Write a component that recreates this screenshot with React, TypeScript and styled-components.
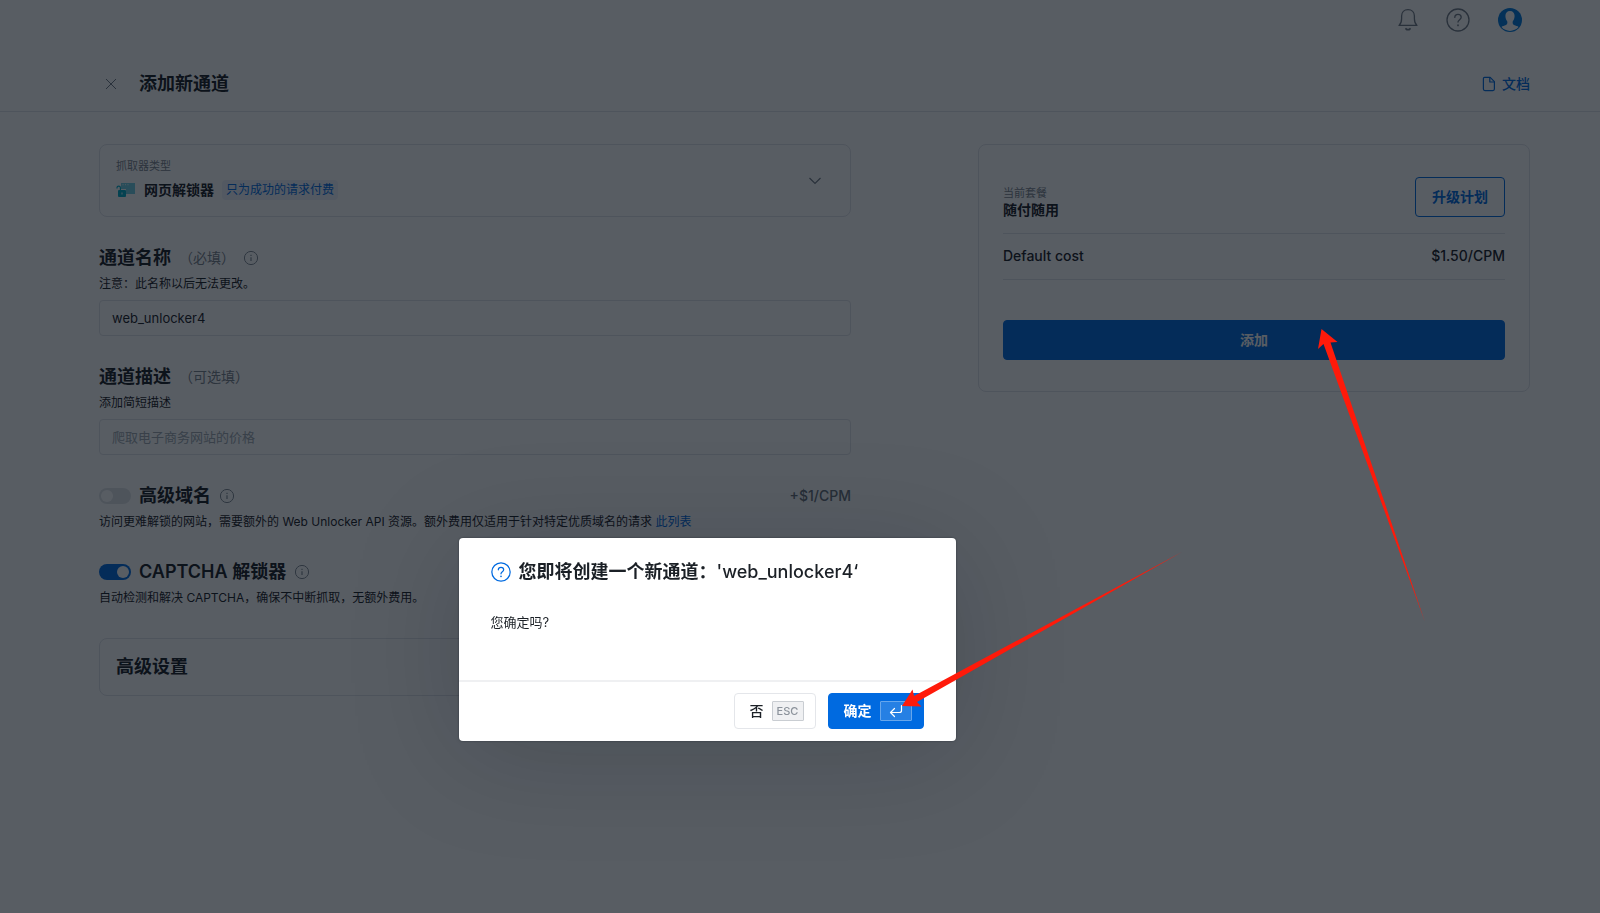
import React from "react";
import styled, { createGlobalStyle, css } from "styled-components";

const ink = "#1b2026";
const blue = "#006ae0";
const line = "#e0e2e8";
const muted = "#7b828c";

const GlobalStyle = createGlobalStyle`
  *, *::before, *::after { box-sizing: border-box; }
  body {
    margin: 0;
    background: #fff;
    color: ${ink};
    font-family: Inter, "Noto Sans CJK SC", sans-serif;
    font-size: 14px;
    line-height: 20px;
  }
  button, input { font: inherit; color: inherit; }
  h1, h2, p { margin: 0; }
  svg { display: block; flex: none; }
`;

const Page = styled.div`
  min-height: 100vh;
`;

const TopBar = styled.header`
  display: flex;
  align-items: center;
  justify-content: flex-end;
  gap: 28px;
  height: 40px;
  padding-right: 78px;
`;

const IconButton = styled.button`
  display: flex;
  align-items: center;
  justify-content: center;
  min-width: 16px;
  padding: 0;
  border: 0;
  background: none;
  color: #727a86;
`;

const SubHeader = styled.div`
  display: flex;
  align-items: center;
  gap: 20px;
  height: 56px;
  margin-top: 16px;
  padding: 0 70px 0 103px;
  border-bottom: 1px solid ${line};
`;

const headingText = css`
  color: ${ink};
  font-size: 18px;
  line-height: 28px;
  font-weight: 600;
`;

const PageTitle = styled.h1`
  ${headingText}
  flex: 1;
`;

const DocsLink = styled.a`
  display: flex;
  align-items: center;
  gap: 6px;
  color: ${blue};
  font-weight: 500;
  text-decoration: none;
`;

const Main = styled.main`
  display: grid;
  grid-template-columns: 752fr 552fr;
  gap: 127px;
  align-items: start;
  padding: 32px 70px 32px 99px;
`;

const Form = styled.form`
  display: flex;
  flex-direction: column;
  gap: 27px;
`;

const Card = styled.section`
  border: 1px solid ${line};
  border-radius: 8px;
`;

const TypeCard = styled(Card)`
  display: flex;
  align-items: center;
  justify-content: space-between;
  height: 73px;
  padding: 0 28px 0 16px;
`;

const TypeInfo = styled.div`
  padding-bottom: 4px;
`;

const Caption = styled.div`
  color: ${muted};
  font-size: 11px;
  line-height: 16px;
`;

const TypeRow = styled.div`
  display: flex;
  align-items: center;
  gap: 8px;
  margin-top: 6px;
`;

const Strong = styled.div`
  font-weight: 700;
  line-height: 18px;
`;

const Tag = styled.span`
  padding: 0 4px;
  border-radius: 4px;
  background: #eef3fc;
  color: ${blue};
  font-size: 12px;
  line-height: 20px;
`;

const HeadingRow = styled.div`
  display: flex;
  align-items: center;
  gap: 8px;
  height: 28px;
  color: #828a95;
`;

const Label = styled.label`
  ${headingText}
`;

const SectionTitle = styled.h2`
  ${headingText}
`;

const Hint = styled.span`
  color: ${muted};
`;

const Price = styled.span`
  margin-left: auto;
  color: #69717b;
  font-weight: 500;
`;

const Note = styled.p`
  margin-top: 3px;
  font-size: 12px;
  line-height: 18px;

  a {
    color: ${blue};
    text-decoration: none;
  }
`;

const TextInput = styled.input`
  display: block;
  width: 100%;
  height: 36px;
  margin-top: 7px;
  padding: 0 12px;
  border: 1px solid ${line};
  border-radius: 4px;
  background: #fff;
  font-size: 13px;

  &::placeholder {
    color: #a0a7b0;
    opacity: 1;
  }
`;

const Toggle = styled.input`
  appearance: none;
  display: flex;
  flex: none;
  width: 32px;
  height: 16px;
  margin: 0;
  padding: 2px;
  border-radius: 8px;
  background: #e0e3e7;

  &::before {
    content: "";
    width: 12px;
    height: 12px;
    border-radius: 50%;
    background: #fff;
  }

  &:checked {
    justify-content: flex-end;
    background: ${blue};
  }
`;

const AdvancedCard = styled(Card)`
  margin-top: 4px;
  padding: 14px 16px;
`;

const PlanCard = styled(Card)`
  padding: 32px 24px 31px;
`;

const PlanRow = styled.div`
  display: flex;
  align-items: flex-start;
  justify-content: space-between;
  padding-bottom: 14px;
  border-bottom: 1px solid ${line};
`;

const PlanInfo = styled.div`
  padding-top: 8px;
`;

const CostRow = styled(PlanRow)`
  padding: 12px 0 13px;
  font-weight: 500;
`;

const Button = styled.button<{ $primary?: boolean; $wide?: boolean }>`
  height: 40px;
  padding: 0 16px;
  border: 1px solid ${blue};
  border-radius: 4px;
  background: ${(p) => (p.$primary ? blue : "#fff")};
  color: ${(p) => (p.$primary ? "#fff" : blue)};
  font-weight: 700;
  ${(p) => p.$wide && "display: block; width: 100%; margin-top: 40px;"}
`;

const Overlay = styled.div`
  position: fixed;
  inset: 0;
  display: flex;
  align-items: flex-start;
  justify-content: center;
  padding: 538px 186px 0 0;
  background: rgba(6, 13, 22, 0.67);
`;

const Dialog = styled.div`
  width: 497px;
  border-radius: 4px;
  background: #fff;
  box-shadow: 0 0 2px rgba(6, 13, 22, 0.5), 0 12px 112px rgba(6, 13, 22, 0.18);
`;

const DialogBody = styled.div`
  height: 144px;
  padding: 20px 32px;
  border-bottom: 2px solid #eff0f2;
`;

const DialogTitle = styled.div`
  display: flex;
  align-items: center;
  gap: 8px;
  color: ${blue};
`;

const ZoneName = styled.span`
  font-weight: 500;
`;

const DialogText = styled.p`
  margin-top: 26px;
  font-size: 13px;
`;

const DialogFooter = styled.div`
  display: flex;
  justify-content: flex-end;
  gap: 12px;
  padding: 11px 32px 12px;
`;

const DialogButton = styled.button<{ $primary?: boolean }>`
  display: flex;
  align-items: center;
  gap: 8px;
  height: 36px;
  padding: 0 11px 0 15px;
  border: 1px solid ${(p) => (p.$primary ? blue : "#e4e6ea")};
  border-radius: 4px;
  background: ${(p) => (p.$primary ? blue : "#fff")};
  color: ${(p) => (p.$primary ? "#fff" : ink)};
  font-weight: ${(p) => (p.$primary ? 700 : 500)};
`;

const Key = styled.kbd<{ $primary?: boolean }>`
  display: flex;
  align-items: center;
  justify-content: center;
  width: 32px;
  height: 20px;
  border: 1px solid ${(p) => (p.$primary ? "#66a6ec" : "#c9cdd2")};
  border-radius: 1px;
  background: ${(p) => (p.$primary ? "#2680e4" : "#eff0f2")};
  color: ${(p) => (p.$primary ? "#fff" : "#8b929b")};
  font-family: inherit;
  font-size: 11px;
  font-weight: 500;
`;

const Arrows = styled.svg`
  position: fixed;
  top: 0;
  left: 0;
  pointer-events: none;
`;

const InfoIcon = () => (
  <svg width="16" height="16" viewBox="0 0 16 16" fill="none" stroke="currentColor" aria-hidden="true">
    <circle cx="8" cy="8" r="6.6" />
    <path d="M8 7.2v3.8" strokeWidth="1.2" />
    <path d="M8 4.8v1.2" strokeWidth="1.2" />
  </svg>
);

const HelpIcon = ({ size, weight }: { size: number; weight: number }) => (
  <svg width={size} height={size} viewBox="0 0 24 24" fill="none" stroke="currentColor" strokeWidth={weight} strokeLinecap="round" aria-hidden="true">
    <circle cx="12" cy="12" r="11" />
    <path d="M8.8 9.4c0-1.8 1.4-3 3.2-3s3.2 1.2 3.2 2.9c0 2.3-3.2 2.4-3.2 4.8" />
    <path d="M12 17.2v.2" strokeWidth={weight * 1.3} />
  </svg>
);

const BellIcon = () => (
  <svg width="20" height="24" viewBox="0 0 20 24" fill="none" stroke="currentColor" strokeWidth="1.3" strokeLinejoin="round" strokeLinecap="round" aria-hidden="true">
    <path d="M1 17.400c2-1.600 2.600-3.800 2.600-6.600V8C3.600 4.200 6.200 1.600 10 1.600S16.400 4.200 16.400 8v2.800c0 2.800.6 5 2.600 6.600z" />
    <path d="M8 20.800c1.100 1.200 2.900 1.200 4 0" strokeWidth="1.800" />
  </svg>
);

const AvatarIcon = () => (
  <svg width="24" height="24" viewBox="0 0 24 24" aria-hidden="true">
    <circle cx="12" cy="12" r="12" fill="#0079dc" />
    <path fill="#fff" d="M12 3c-3 0-4.600 2-4.600 5 0 2.200.8 4 1.800 5.200.4 1.600.1 3.100-1.200 3.700-1.700.7-3.600 1-4.500 2a11 11 0 0 0 17 0c-.9-1-2.800-1.300-4.500-2-1.300-.6-1.600-2.100-1.200-3.700 1-1.200 1.800-3 1.800-5.200 0-3-1.600-5-4.600-5z" />
  </svg>
);

const CloseIcon = () => (
  <svg width="16" height="16" viewBox="0 0 16 16" fill="none" stroke="currentColor" aria-hidden="true">
    <path d="M3 3l10 10M13 3L3 13" />
  </svg>
);

const FileIcon = () => (
  <svg width="14" height="16" viewBox="0 0 14 16" fill="none" stroke="currentColor" strokeWidth="1.2" strokeLinejoin="round" aria-hidden="true">
    <path d="M2.500 1.400h5.700l4.200 4.200v7.500a1.500 1.500 0 0 1-1.500 1.500H2.900a1.500 1.500 0 0 1-1.500-1.500V2.500c0-.6.500-1.100 1.100-1.100z" />
    <path d="M7.800 1.600V6h4.400" />
  </svg>
);

const UnlockerIcon = () => (
  <svg width="20" height="16" viewBox="0 0 20 16" aria-hidden="true">
    <path fill="#72cfe3" d="M5 1h14v11h-9V7H5z" />
    <path d="M6.500 2.700h1M9 2.700h1M11.500 2.700h1" stroke="#e4f7fb" />
    <rect x="2" y="8" width="8" height="7" rx="1" fill="#00acc9" />
    <path d="M1 6.500V5.800a1.700 1.700 0 0 1 3.400 0V8" fill="none" stroke="#00acc9" strokeWidth="1.2" />
    <path d="M6 10.500v2" stroke="#c6f0f7" strokeWidth="1.2" />
  </svg>
);

const ChevronIcon = () => (
  <svg width="14" height="14" viewBox="0 0 14 14" fill="none" stroke="#727a86" strokeWidth="1.2" aria-hidden="true">
    <path d="M1.500 4L7 9.500 12.500 4" />
  </svg>
);

const EnterIcon = () => (
  <svg width="14" height="14" viewBox="0 0 14 14" fill="none" stroke="currentColor" strokeWidth="1.2" strokeLinecap="round" strokeLinejoin="round" aria-hidden="true">
    <path d="M12.500 1.500v5a2 2 0 0 1-2 2h-9" />
    <path d="M5.500 4.500l-4 4 4 4" />
  </svg>
);

export default function App() {
  return (
    <>
      <GlobalStyle />
      <Page>
        <TopBar>
          <IconButton aria-label="通知"><BellIcon /></IconButton>
          <IconButton aria-label="帮助"><HelpIcon size={24} weight={1.3} /></IconButton>
          <IconButton aria-label="账户"><AvatarIcon /></IconButton>
        </TopBar>
        <SubHeader>
          <IconButton aria-label="关闭"><CloseIcon /></IconButton>
          <PageTitle>添加新通道</PageTitle>
          <DocsLink href="#docs"><FileIcon />文档</DocsLink>
        </SubHeader>
        <Main>
          <Form onSubmit={(e) => e.preventDefault()}>
            <TypeCard>
              <TypeInfo>
                <Caption>抓取器类型</Caption>
                <TypeRow>
                  <UnlockerIcon />
                  <Strong>网页解锁器</Strong>
                  <Tag>只为成功的请求付费</Tag>
                </TypeRow>
              </TypeInfo>
              <ChevronIcon />
            </TypeCard>
            <div>
              <HeadingRow>
                <Label htmlFor="zone-name">通道名称</Label>
                <Hint>（必填）</Hint>
                <InfoIcon />
              </HeadingRow>
              <Note>注意：此名称以后无法更改。</Note>
              <TextInput id="zone-name" defaultValue="web_unlocker4" />
            </div>
            <div>
              <HeadingRow>
                <Label htmlFor="zone-description">通道描述</Label>
                <Hint>（可选填）</Hint>
              </HeadingRow>
              <Note>添加简短描述</Note>
              <TextInput id="zone-description" placeholder="爬取电子商务网站的价格" />
            </div>
            <div>
              <HeadingRow>
                <Toggle type="checkbox" id="premium" />
                <Label htmlFor="premium">高级域名</Label>
                <InfoIcon />
                <Price>+$1/CPM</Price>
              </HeadingRow>
              <Note>
                访问更难解锁的网站，需要额外的 Web Unlocker API 资源。额外费用仅适用于针对特定优质域名的请求 <a href="#domains">此列表</a>
              </Note>
            </div>
            <div>
              <HeadingRow>
                <Toggle type="checkbox" id="captcha" defaultChecked />
                <Label htmlFor="captcha">CAPTCHA 解锁器</Label>
                <InfoIcon />
              </HeadingRow>
              <Note>自动检测和解决 CAPTCHA，确保不中断抓取，无额外费用。</Note>
            </div>
            <AdvancedCard>
              <SectionTitle>高级设置</SectionTitle>
            </AdvancedCard>
          </Form>
          <PlanCard>
            <PlanRow>
              <PlanInfo>
                <Caption>当前套餐</Caption>
                <Strong>随付随用</Strong>
              </PlanInfo>
              <Button type="button">升级计划</Button>
            </PlanRow>
            <CostRow>
              <span>Default cost</span>
              <span>$1.50/CPM</span>
            </CostRow>
            <Button type="button" $primary $wide>添加</Button>
          </PlanCard>
        </Main>
      </Page>
      <Overlay>
        <Dialog role="dialog" aria-modal="true" aria-labelledby="dialog-title">
          <DialogBody>
            <DialogTitle>
              <HelpIcon size={20} weight={1.5} />
              <SectionTitle id="dialog-title">
                您即将创建一个新通道：<ZoneName>'web_unlocker4‘</ZoneName>
              </SectionTitle>
            </DialogTitle>
            <DialogText>您确定吗?</DialogText>
          </DialogBody>
          <DialogFooter>
            <DialogButton type="button">否<Key>ESC</Key></DialogButton>
            <DialogButton type="button" $primary>确定<Key $primary><EnterIcon /></Key></DialogButton>
          </DialogFooter>
        </Dialog>
      </Overlay>
      <Arrows width="1600" height="913" viewBox="0 0 1600 913" fill="#ff1a0a" aria-hidden="true">
        <path d="M1321.500 329L1337.500 342L1330.500 342.500L1425 622L1323.500 344L1318 349z" />
        <path d="M902 706L912.500 689.500L914 696L1182 552L917 702L921.500 706.500z" />
      </Arrows>
    </>
  );
}
